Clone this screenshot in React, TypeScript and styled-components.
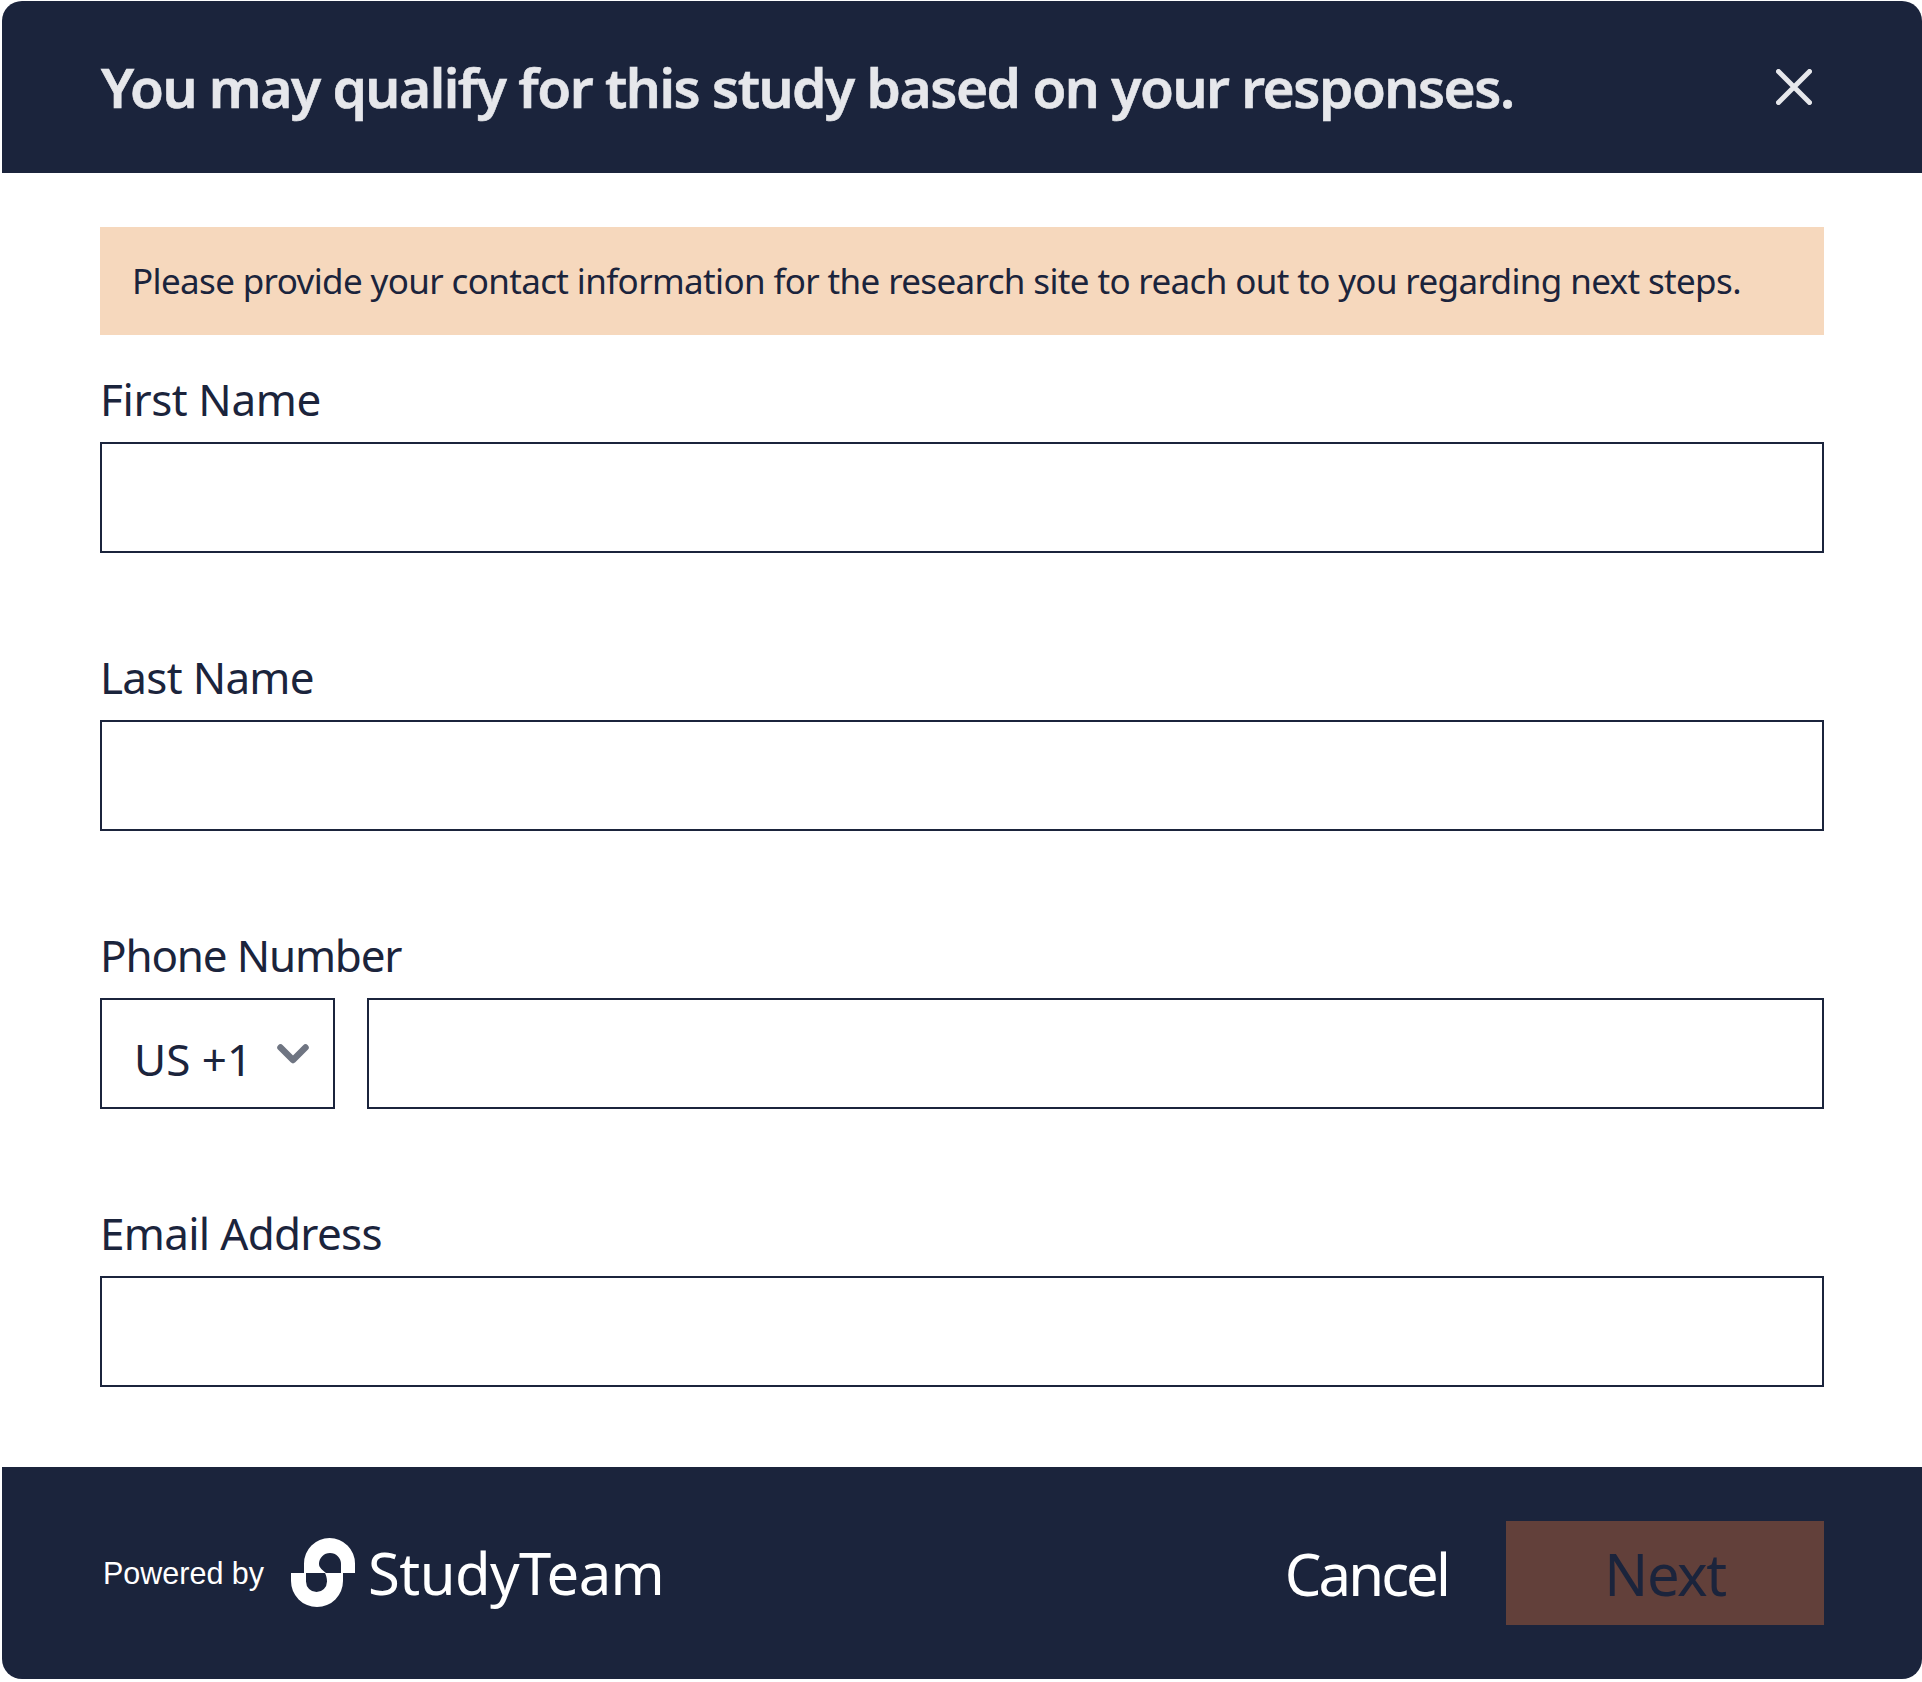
import React from "react";
import styled, { createGlobalStyle } from "styled-components";

const Global = createGlobalStyle`
  html, body { margin: 0; padding: 0; background: #fff; }
  body { font-family: "Noto Sans", "Open Sans", sans-serif; color: #1b243c; }
`;
const Page = styled.div`padding: 1px 0 3px 2px;`;
const Modal = styled.div`
  width: 1920px; height: 1678px; display: flex; flex-direction: column;
  background: #fff; border-radius: 20px; overflow: hidden;
`;
const Header = styled.header`
  height: 172px; flex: none; background: #1b243c; display: flex; align-items: center;
  justify-content: space-between; padding: 0 110px 0 98px;
`;
const Title = styled.h1`
  margin: 0 0 2px 1px; font-size: 55px; font-weight: 600; letter-spacing: -1.47px; color: #e6e7eb; line-height: 1; white-space: nowrap;
  -webkit-text-stroke: 0.6px #e6e7eb;
`;
const Close = styled.button`
  width: 36px; height: 36px; padding: 0; border: 0; background: none; display: flex; color: #e6e7eb;
`;
const Body = styled.main`
  flex: 1; display: flex; flex-direction: column; padding: 54px 98px 0;
`;
const Banner = styled.p`
  margin: 0; height: 108px; flex: none; display: flex; align-items: center; padding: 0 32px 1px;
  box-sizing: border-box;
  background: #f6d8bd; font-size: 35px; letter-spacing: -0.64px; color: #1b243c; white-space: nowrap;
`;
const Field = styled.div`display: flex; flex-direction: column; height: 278px; padding-top: 20px; box-sizing: border-box;`;
const Label = styled.label<{ $tracking: number }>`
  font-size: 44px; letter-spacing: ${(p) => p.$tracking}px; line-height: 89px; height: 87px; flex: none; color: #1b243c;
`;
const Input = styled.input`
  flex: none; width: 100%; min-width: 0; height: 111px; box-sizing: border-box; border: 2px solid #1b243c;
  border-radius: 0; background: #fff; display: block; padding: 0;
`;
const PhoneInput = styled(Input)`flex: 1 1 auto; width: auto;`;
const PhoneRow = styled.div`display: flex; gap: 32px;`;
const Select = styled.div`
  width: 235px; height: 111px; flex: none; box-sizing: border-box; border: 2px solid #1b243c;
  display: flex; align-items: center; justify-content: space-between; padding: 0 24px 0 32px;
  font-size: 44px;
`;
const SelectValue = styled.span`padding-top: 10px;`;
const Footer = styled.footer`
  height: 212px; flex: none; background: #1b243c; display: flex; align-items: center;
  justify-content: space-between; padding: 0 98px 0 101px;
`;
const Brand = styled.div`display: flex; align-items: center;`;
const Powered = styled.span`font-family: "Liberation Sans", Arial, sans-serif; font-size: 30.5px; color: #fff;`;
const LogoMark = styled.svg`width: 66px; height: 70px; margin-left: 27px; flex: none;`;
const LogoText = styled.span`font-size: 58px; letter-spacing: -0.6px; color: #fff; margin-left: 11px; line-height: 1;`;
const Actions = styled.div`display: flex; align-items: center; gap: 58px;`;
const Cancel = styled.button`
  border: 0; background: none; padding: 0; color: #fff; font: inherit; font-size: 58px; letter-spacing: -2.9px;
`;
const Next = styled.button`
  width: 318px; height: 104px; border: 0; padding: 0; background: #62403a; color: #1b243c;
  font: inherit; font-size: 58px; letter-spacing: -1.5px;
`;

const Logo = () => (
  <LogoMark viewBox="290 1538 66 70" aria-hidden>
    <path fill="#fff" d="M303 1573V1563.5A25.5 25.5 0 0 1 354 1563.5V1573H340V1564A11 11 0 0 0 318 1564C318 1568 322 1570 325 1573Z" />
    <path fill="#fff" d="M290 1573H305V1581.5A10.5 10.5 0 0 0 326 1581.5C326 1578 325 1575 324 1573H342V1581A26 26 0 0 1 290 1581Z" />
  </LogoMark>
);

export default function App() {
  return (
    <Page>
      <Global />
      <Modal>
        <Header>
          <Title>You may qualify for this study based on your responses.</Title>
          <Close aria-label="Close">
            <svg width="36" height="36" viewBox="0 0 36 36" fill="none" stroke="currentColor" strokeWidth="5" strokeLinecap="round">
              <path d="M2.5 2.5L33.5 33.5M33.5 2.5L2.5 33.5" />
            </svg>
          </Close>
        </Header>
        <Body>
          <Banner>Please provide your contact information for the research site to reach out to you regarding next steps.</Banner>
          <Field><Label $tracking={-0.4}>First Name</Label><Input /></Field>
          <Field><Label $tracking={-0.7}>Last Name</Label><Input /></Field>
          <Field>
            <Label $tracking={-1.2}>Phone Number</Label>
            <PhoneRow>
              <Select>
                <SelectValue>US +1</SelectValue>
                <svg width="32" height="20" viewBox="0 0 32 20" fill="none" stroke="#6f7582" strokeWidth="6.5" strokeLinecap="round" strokeLinejoin="round"><path d="M3.5 3.5L16 16L28.5 3.5" /></svg>
              </Select>
              <PhoneInput />
            </PhoneRow>
          </Field>
          <Field><Label $tracking={-0.7}>Email Address</Label><Input /></Field>
        </Body>
        <Footer>
          <Brand>
            <Powered>Powered by</Powered>
            <Logo />
            <LogoText>StudyTeam</LogoText>
          </Brand>
          <Actions>
            <Cancel>Cancel</Cancel>
            <Next>Next</Next>
          </Actions>
        </Footer>
      </Modal>
    </Page>
  );
}
